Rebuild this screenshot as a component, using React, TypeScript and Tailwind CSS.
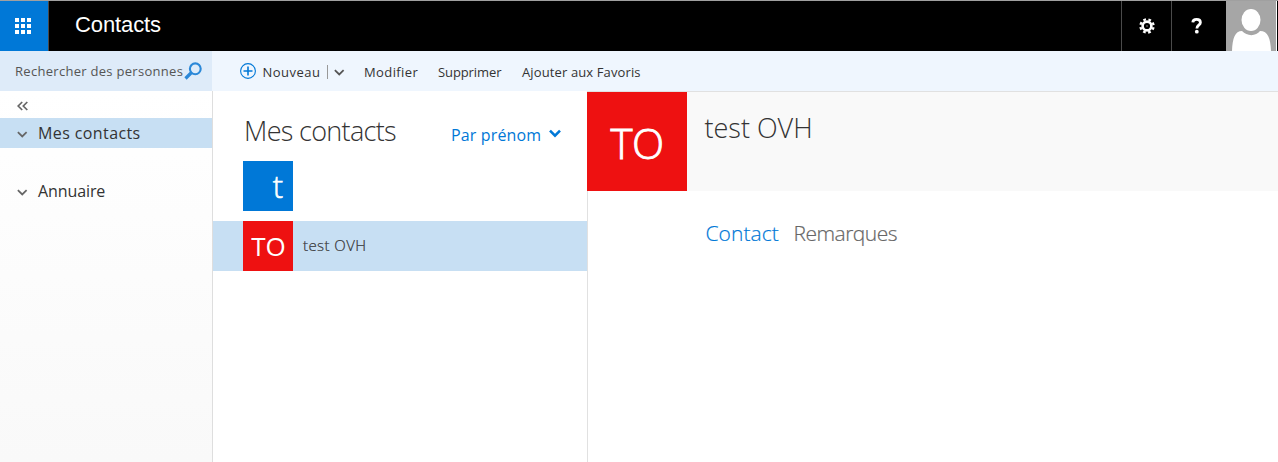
import type { ReactNode } from 'react';

function Chevron({ className, width = 1.8 }: { className: string; width?: number }) {
  return (
    <svg viewBox="0 0 12 8" className={className} fill="none" stroke="currentColor" strokeWidth={width}>
      <path d="M1 1.2 6 6.2l5-5" />
    </svg>
  );
}

function Header() {
  return (
    <header className="flex h-[51px] border-t border-[#a0a0a0] bg-black text-white">
      <button className="flex w-12 items-center justify-center bg-[#0078d7]">
        <svg viewBox="0 0 16 16" className="ml-[-2px] size-4" fill="currentColor">
          {[0, 6, 12].map((y) => [0, 6, 12].map((x) => <rect key={`${x}-${y}`} x={x} y={y} width="4" height="4" />))}
        </svg>
      </button>
      <div className="w-px bg-[#4a4a4a]" />
      <h1 className="pl-[26px] pt-[8px] font-['Liberation_Sans',sans-serif] text-[22px] leading-[32px] tracking-[-0.1px]">Contacts</h1>
      <div className="ml-auto flex">
        <button className="flex w-[50px] items-center justify-center border-l border-[#4a4a4a]">
          <svg viewBox="0 0 16 16" className="size-4" fill="none" stroke="currentColor">
            <circle cx="8" cy="8" r="4.4" strokeWidth="2.6" />
            <circle cx="8" cy="8" r="6.6" strokeWidth="2.3" strokeDasharray="2.7 2.484" strokeDashoffset="-1.24" />
            <circle cx="8" cy="8" r="1" fill="#555" stroke="none" />
          </svg>
        </button>
        <button className="flex w-[55px] items-center border-l border-[#4a4a4a] pl-[19px]">
          <svg viewBox="0 0 12 16" className="h-4 w-3" fill="none" stroke="currentColor">
            <path d="M1.8 4.3C2 2 3.6 1.4 5.6 1.4c2.4 0 3.8 1.1 3.8 3 0 2.8-3.5 2.8-3.5 6" strokeWidth="2.8" />
            <circle cx="5.8" cy="13.7" r="1.9" fill="currentColor" stroke="none" />
          </svg>
        </button>
        <svg viewBox="0 0 50 50" className="h-[50px] w-[50px] bg-[#a6a6a6]">
          <path d="M6 50C6.500 37 9 30 16 30c5 5.500 14 5.500 18 0 8 0 10.500 7 11 20Z" fill="white" />
          <ellipse cx="25" cy="19" rx="10.500" ry="12" fill="#a6a6a6" />
          <ellipse cx="25" cy="19" rx="9.500" ry="11" fill="white" />
        </svg>
        <div className="w-px bg-white" />
        <div className="w-px bg-black" />
      </div>
    </header>
  );
}

function Folder({ children, selected = false }: { children: ReactNode; selected?: boolean }) {
  return (
    <div className={`flex h-[30px] items-center pl-[17px] text-[16px] text-[#333] ${selected ? 'bg-[#c7dff3] tracking-[0.4px]' : 'tracking-[-0.1px]'}`}>
      <Chevron className="mt-[3px] h-[7px] w-[10.5px] text-[#666]" width={2} />
      <span className="ml-[10.5px] whitespace-nowrap">{children}</span>
    </div>
  );
}

export default function App() {
  return (
    <div className="flex h-[462px] w-[1278px] flex-col overflow-hidden bg-white font-['Open_Sans',sans-serif] text-[#333]">
      <Header />
      <div className="flex h-10 bg-[#eff6fe]">
        <div className="flex w-[212px] items-center bg-[#deebf9] pl-[15px] text-[13px] text-[#555]">
          <span className="mt-[1px] w-[169px] whitespace-nowrap tracking-[0.29px]">Rechercher des personnes</span>
          <svg viewBox="0 0 18 18" className="size-[18px] text-[#2b88d8]" fill="none" stroke="currentColor">
            <circle cx="11.3" cy="6.8" r="5.4" strokeWidth="2.1" />
            <path d="m7.5 10.5-6 6" strokeWidth="3.2" />
          </svg>
        </div>
        <nav className="flex items-center pl-[28px] pt-[2px] text-[13px]">
          <svg viewBox="0 0 16 16" className="-mt-[2px] size-4 text-[#0078d7]" fill="none" stroke="currentColor">
            <circle cx="8" cy="8" r="7.4" strokeWidth="1.1" />
            <path d="M8 3.5v9M3.5 8h9" strokeWidth="1.6" />
          </svg>
          <span className="ml-[6.5px] mt-px w-[64.5px] whitespace-nowrap tracking-[0.5px]">Nouveau</span>
          <div className="h-[14px] w-px bg-[#999]" />
          <Chevron className="ml-[6px] h-[7px] w-[10.5px] text-[#555]" width={2} />
          <span className="ml-[19.5px] mt-px w-[74px] whitespace-nowrap tracking-[0.4px]">Modifier</span>
          <span className="mt-px w-[84px] whitespace-nowrap tracking-[-0.1px]">Supprimer</span>
          <span className="mt-px whitespace-nowrap tracking-[0.12px]">Ajouter aux Favoris</span>
        </nav>
      </div>
      <main className="flex min-h-0 flex-1">
        <aside className="w-[213px] border-r border-[#dedede] bg-linear-to-b from-white to-[#f9f9f9]">
          <div className="flex h-[27px] items-center pl-[17px] pt-[2px]">
            <svg viewBox="0 0 12 10" className="h-[10px] w-3" fill="none" stroke="#666" strokeWidth="1.7">
              <path d="M5.2 1 1.2 5l4 4M10.3 1l-4 4 4 4" />
            </svg>
          </div>
          <Folder selected>Mes contacts</Folder>
          <div className="h-7" />
          <Folder>Annuaire</Folder>
        </aside>
        <section className="w-[374px]">
          <div className="flex h-[70px] pl-[31px]">
            <h2 className="w-[207px] pt-[20px] text-[27px] font-light leading-[40px] tracking-[-0.68px] whitespace-nowrap">Mes contacts</h2>
            <div className="flex pt-[32px] text-[16px] leading-[24px] text-[#0078d7]">
              <span className="w-[98px] whitespace-nowrap tracking-[0.15px]">Par prénom</span>
              <Chevron className="mt-[6px] h-[9px] w-3" width={2.6} />
            </div>
          </div>
          <div className="ml-[30px] flex size-[50px] items-center justify-end bg-[#0078d7] pr-[10px] text-[31px] font-light text-white [-webkit-text-stroke:0.6px_white]">t</div>
          <div className="mt-[10px] flex h-[50px] items-center bg-[#c7dff3] pl-[30px]">
            <div className="flex size-[50px] items-center justify-center bg-[#ee1111] pl-px pt-px text-[26px] text-white">TO</div>
            <span className="-mt-[2px] ml-[10px] text-[15px] font-light tracking-[0.42px] [-webkit-text-stroke:0.2px_#333]">test OVH</span>
          </div>
        </section>
        <section className="min-w-0 flex-1 border-t border-[#e1e1e1]">
          <div className="flex h-[99px] bg-[#f9f9f9]">
            <div className="flex h-[99px] w-[100px] items-center justify-center bg-[#ee1111] pt-px text-[42px] font-light tracking-[-0.5px] text-white [-webkit-text-stroke:0.9px_white]">TO</div>
            <h2 className="pl-[17.5px] pt-[16px] text-[27px] font-light leading-[40px]">test OVH</h2>
          </div>
          <div className="flex h-[271px] border-l border-[#e1e1e1] pl-[117.5px] pt-[27px] text-[21px] font-light leading-[30px]">
            <span className="w-[88px] tracking-[0.05px] text-[#0078d7] [-webkit-text-stroke:0.2px_#0078d7]">Contact</span>
            <span className="tracking-[-0.5px] text-[#666] [-webkit-text-stroke:0.2px_#666]">Remarques</span>
          </div>
        </section>
      </main>
    </div>
  );
}
